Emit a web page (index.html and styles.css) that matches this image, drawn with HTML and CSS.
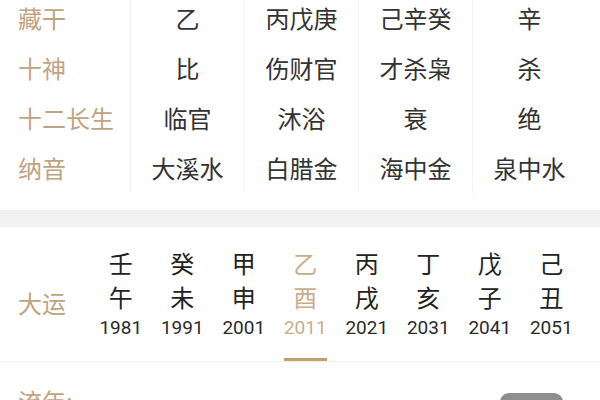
FILE: index.html
```html
<!DOCTYPE html>
<html lang="zh">
<head>
<meta charset="utf-8">
<link rel="stylesheet" href="styles.css">
</head>
<body>
<div class="pillars">
  <div class="row">
    <div class="lbl">藏干</div><div class="cell">乙</div><div class="cell">丙戊庚</div><div class="cell">己辛癸</div><div class="cell">辛</div>
  </div>
  <div class="row">
    <div class="lbl">十神</div><div class="cell">比</div><div class="cell">伤财官</div><div class="cell">才杀枭</div><div class="cell">杀</div>
  </div>
  <div class="row">
    <div class="lbl">十二长生</div><div class="cell">临官</div><div class="cell">沐浴</div><div class="cell">衰</div><div class="cell">绝</div>
  </div>
  <div class="row">
    <div class="lbl">纳音</div><div class="cell">大溪水</div><div class="cell">白腊金</div><div class="cell">海中金</div><div class="cell">泉中水</div>
  </div>
</div>
<div class="gap"></div>
<div class="band"></div>
<div class="dayun">
  <div class="dy-label">大运</div>
  <div class="dy-cols">
    <div class="dy-col"><span class="gz">壬</span><span class="gz">午</span><span class="yr">1981</span></div>
    <div class="dy-col"><span class="gz">癸</span><span class="gz">未</span><span class="yr">1991</span></div>
    <div class="dy-col"><span class="gz">甲</span><span class="gz">申</span><span class="yr">2001</span></div>
    <div class="dy-col active"><span class="gz">乙</span><span class="gz">酉</span><span class="yr">2011</span><span class="bar"></span></div>
    <div class="dy-col"><span class="gz">丙</span><span class="gz">戌</span><span class="yr">2021</span></div>
    <div class="dy-col"><span class="gz">丁</span><span class="gz">亥</span><span class="yr">2031</span></div>
    <div class="dy-col"><span class="gz">戊</span><span class="gz">子</span><span class="yr">2041</span></div>
    <div class="dy-col"><span class="gz">己</span><span class="gz">丑</span><span class="yr">2051</span></div>
  </div>
</div>
<div class="liunian">
  <div class="ln-label">流年:</div>
  <div class="ln-btn"></div>
</div>
</body>
</html>
```
FILE: styles.css
```css
html, body {
  margin: 0;
  padding: 0;
  background: #ffffff;
  width: 600px;
  height: 400px;
  overflow: hidden;
  font-family: "Noto Sans CJK SC", "Noto Sans", sans-serif;
}

.pillars {
  margin-top: -7px;
}

.row {
  display: grid;
  grid-template-columns: 130px 114px 114px 114px 114px;
  height: 50px;
}

.lbl {
  padding-left: 18px;
  font-size: 24px;
  line-height: 50px;
  color: #c0a480;
  white-space: nowrap;
}

.cell {
  border-left: 1px solid #f2f2f2;
  text-align: center;
  font-size: 24px;
  line-height: 50px;
  color: #333333;
}

.gap {
  height: 17px;
}

.band {
  height: 17px;
  background: #f2f2f2;
}

.dayun {
  display: flex;
  height: 134px;
  border-bottom: 1px solid #f0f0f0;
}

.dy-label {
  width: 72px;
  padding-left: 18px;
  padding-top: 59px;
  font-size: 24px;
  line-height: 34px;
  color: #c0a480;
}

.dy-cols {
  display: grid;
  grid-template-columns: repeat(8, 61.5px);
}

.dy-col {
  display: flex;
  flex-direction: column;
  align-items: center;
  padding-top: 19px;
  color: #222222;
}

.gz {
  font-size: 24px;
  line-height: 34px;
}

.yr {
  font-family: Roboto, "Noto Sans", sans-serif;
  font-size: 19px;
  line-height: 24px;
  padding-top: 2px;
  color: #2a2a2a;
}

.dy-col.active {
  color: #c9ad8b;
}

.dy-col.active .yr {
  color: #c9ad8b;
}

.bar {
  margin-top: auto;
  width: 43px;
  height: 3px;
  background: #c49e6e;
}

.liunian {
  display: flex;
  justify-content: space-between;
  padding: 22px 37px 0 18px;
}

.ln-label {
  font-size: 24px;
  line-height: 34px;
  color: #c0a480;
}

.ln-btn {
  width: 63px;
  height: 30px;
  margin-top: 9px;
  border-radius: 9px;
  background: #8e8e8e;
}
```
